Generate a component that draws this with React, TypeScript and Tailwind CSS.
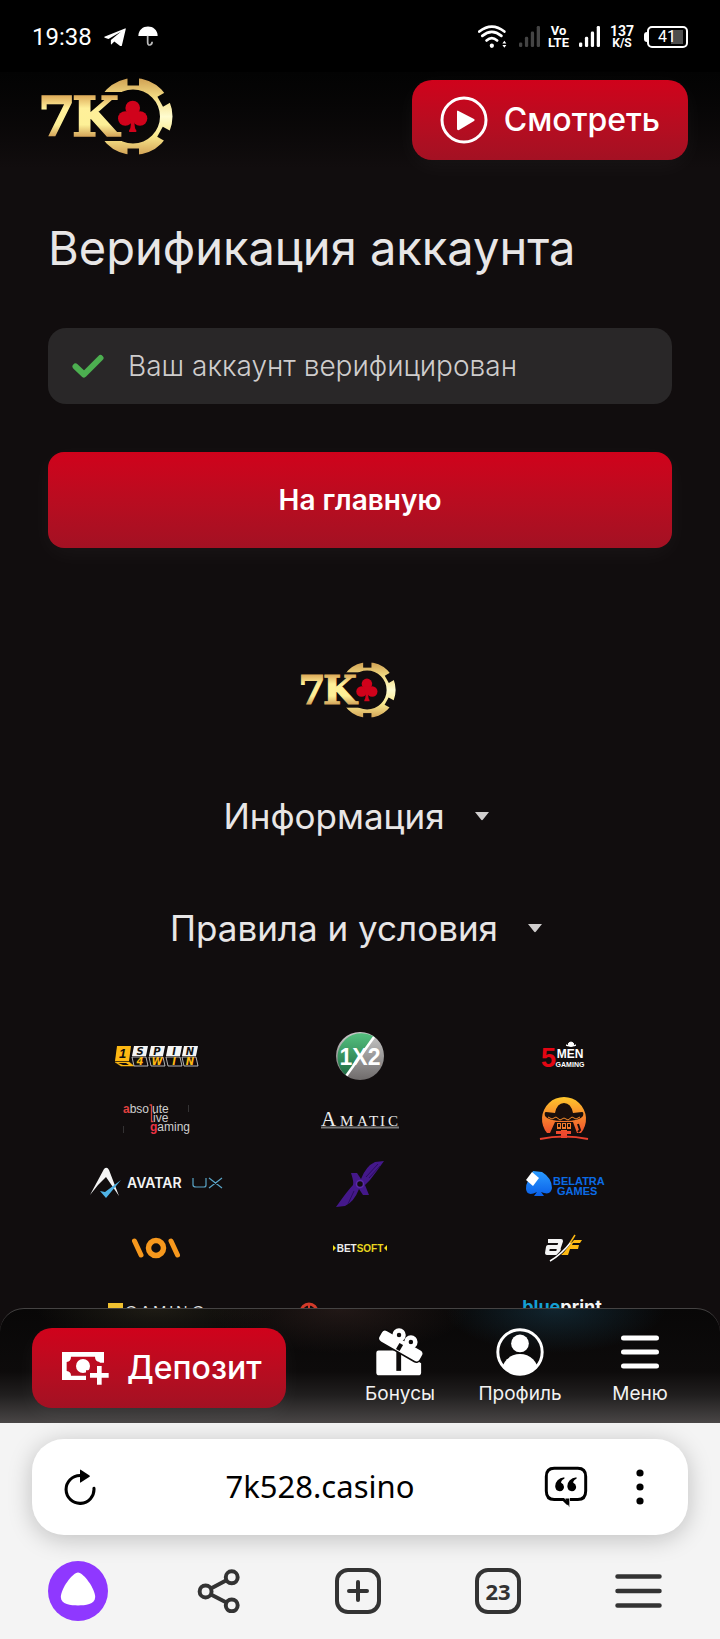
import type { ReactNode } from "react";

const redButton =
  "bg-linear-to-b from-[#d0021b] to-[#a31123] text-white shadow-[0_6px_24px_rgba(255,255,255,0.04)]";

function Logo({ id, className }: { id: string; className: string }) {
  return (
    <svg viewBox="0 0 133 77" className={`overflow-visible ${className}`} role="img" aria-label="7K">
      <defs>
        <linearGradient id={`${id}-ring`} x1="0" y1="0" x2="0" y2="77" gradientUnits="userSpaceOnUse">
          <stop offset="0" stopColor="#cf9f52" />
          <stop offset="0.25" stopColor="#f3dc84" />
          <stop offset="0.5" stopColor="#fffccf" />
          <stop offset="0.75" stopColor="#f9e88c" />
          <stop offset="1" stopColor="#d2a256" />
        </linearGradient>
        <linearGradient id={`${id}-text`} x1="0" y1="18" x2="0" y2="59" gradientUnits="userSpaceOnUse">
          <stop offset="0" stopColor="#dfae5c" />
          <stop offset="0.3" stopColor="#fff09a" />
          <stop offset="0.7" stopColor="#fdf097" />
          <stop offset="1" stopColor="#d2a056" />
        </linearGradient>
        <mask id={`${id}-mask`}>
          <rect width="133" height="77" fill="#fff" />
          <rect x="40" y="14" width="43" height="49" fill="#000" />
          <rect x="87.5" y="-2" width="11.5" height="9.5" fill="#000" />
          <rect x="87.5" y="70.5" width="11.5" height="9" fill="#000" />
          <rect x="87.5" y="-2" width="11.5" height="9.5" fill="#000" transform="rotate(61 93 38.5)" />
          <rect x="87.5" y="-2" width="11.5" height="9.5" fill="#000" transform="rotate(119 93 38.5)" />
        </mask>
      </defs>
      <path
        fillRule="evenodd"
        mask={`url(#${id}-mask)`}
        fill={`url(#${id}-ring)`}
        d="M94 0a38.5 38.5 0 0 1 0 77a38.5 38.5 0 0 1 0-77zM93 11.5a27 27 0 0 0 0 54a27 27 0 0 0 0-54z"
      />
      <g fill={`url(#${id}-text)`} stroke={`url(#${id}-text)`} strokeWidth="1.500" fontFamily="DejaVu Serif" fontWeight="700" fontSize="54">
        <text x="-2" y="58">7</text>
        <text x="32" y="58">K</text>
      </g>
      <g fill="#d0021b">
        <circle cx="92.700" cy="30" r="7.300" />
        <circle cx="85.300" cy="40.500" r="7.300" />
        <circle cx="100" cy="40.500" r="7.300" />
        <path d="M88 34h9.500v10H94.500q0 7 1.800 8v2h-7.200v-2q1.800-1 1.800-8z" />
      </g>
    </svg>
  );
}

function Signal({ className }: { className: string }) {
  return (
    <svg viewBox="0 0 64 66" className={className} fill="currentColor" aria-hidden="true">
      <rect x="0" y="50" width="10" height="14" rx="4" />
      <rect x="18" y="33" width="10" height="31" rx="4" />
      <rect x="36" y="17" width="10" height="47" rx="4" />
      <rect x="54" y="0" width="10" height="64" rx="4" />
    </svg>
  );
}

function StatusBar() {
  return (
    <div className="flex h-[72px] shrink-0 items-center justify-between bg-black px-8 pt-px font-['Roboto',sans-serif] text-white">
      <div className="flex items-center">
        <span className="text-2xl">19:38</span>
        <svg viewBox="313 80 64 58" className="ml-3 w-[22px]" fill="#fff" aria-hidden="true">
          <path d="M314 108 374 84Q377 83 376 87L365 134Q364 138 360 135L343 122 335 130Q333 132 333 128V118L362 94 326 115 315 111Q313 109 314 108z" />
        </svg>
        <svg viewBox="412 78 58 60" className="ml-3 w-5" aria-hidden="true">
          <path fill="#fff" d="M413 107C413 70 469 70 469 107z" />
          <path fill="none" stroke="#bbb" strokeWidth="5" d="M440 106V125Q440 134 447 133 453 132 453 124" />
        </svg>
      </div>
      <div className="flex items-center">
        <svg viewBox="351 70 88 72" className="w-[29px]" fill="none" stroke="#fff" strokeWidth="8" strokeLinecap="round" aria-hidden="true">
          <path d="M355 90Q393 60 431 90M364 103Q393 79 422 103M377 117Q393 103 409 117" />
          <circle cx="393" cy="133" r="6.500" fill="#fff" stroke="none" />
          <path fill="#fff" stroke="none" d="M431 118 437 126H425zM431 139 437 131H425z" />
        </svg>
        <Signal className="ml-3 w-[21px] text-[#444]" />
        <span className="ml-2 flex w-[21px] flex-col items-center text-[13px] leading-[12px] font-bold">
          <span>Vo</span>
          <span>LTE</span>
        </span>
        <Signal className="ml-2.5 w-[21px]" />
        <span className="ml-2.5 flex w-6 flex-col items-center text-sm leading-[12px] font-bold">
          <span>137</span>
          <span className="text-xs leading-[12px]">K/S</span>
        </span>
        <span className="ml-2.5 h-2.5 w-[3px] rounded-l-sm bg-white" />
        <span className="flex h-[22px] w-[41px] items-center rounded-[5px] border-2 border-white bg-linear-to-r from-transparent from-60% to-[#4d4d4d] to-60% bg-clip-content py-[2px] pr-[3px] pl-[9px] text-base">
          41
        </span>
      </div>
    </div>
  );
}

function Cell({ label, children }: { label: string; children: ReactNode }) {
  return (
    <li className="flex h-16 justify-center">
      <a href="#" aria-label={label}>
        <svg viewBox="-75 -32 150 64" className="h-16 w-[150px]" fontFamily="Liberation Sans" aria-hidden="true">
          {children}
        </svg>
      </a>
    </li>
  );
}

function Providers() {
  const tiles: [number, string, string][] = [
    [-24, "S", "4"],
    [-7, "P", "W"],
    [10, "I", "I"],
    [26, "N", "N"],
  ];
  return (
    <ul className="mt-10 grid grid-cols-3 px-[54px]">
      <Cell label="1spin4win">
        <path d="M-39-10H-25L-27 5H-41z" fill="#fdb813" />
        <path d="M-41 6H-27L-22 10H-35z" fill="#fdb813" stroke="#fdb813" strokeWidth=".5" />
        <path d="M-38 7h8l3 2h-6z" fill="#110d0e" />
        <text x="-37" y="2" fontSize="13" fontWeight="700" fontStyle="italic" fill="#110d0e">1</text>
        {tiles.map(([x, top, bottom]) => (
          <g key={x}>
            <path d={`M${x + 2}-10h14l-2 10h-14z`} fill="#f5f5f5" />
            <path d={`M${x} 1h14l2 9h-14z`} fill="#110d0e" stroke="#ddd" strokeWidth=".8" />
            <text x={x + 8} y="-1.500" fontSize="10" fontWeight="700" fontStyle="italic" fontFamily="DejaVu Sans" textAnchor="middle" fill="#111">{top}</text>
            <text x={x + 8} y="9" fontSize="10" fontWeight="700" fontStyle="italic" fontFamily="DejaVu Sans" textAnchor="middle" fill="#fdb813">{bottom}</text>
          </g>
        ))}
      </Cell>
      <Cell label="1X2">
        <defs>
          <linearGradient id="x2-green" x1="0" y1="0" x2="0" y2="1">
            <stop offset="0" stopColor="#55c07f" />
            <stop offset="1" stopColor="#1f6b43" />
          </linearGradient>
          <linearGradient id="x2-grey" x1="0" y1="0" x2="0" y2="1">
            <stop offset="0" stopColor="#c9c9c9" />
            <stop offset="1" stopColor="#6f6b6b" />
          </linearGradient>
        </defs>
        <circle r="24" fill="url(#x2-grey)" />
        <path d="M-14 19.500A24 24 0 0 1 14.500-19z" fill="url(#x2-green)" />
        <path d="M-13.500 19.500 14-19" stroke="#fff" strokeWidth="2.500" />
        <text y="9" fontSize="23" fontWeight="700" textAnchor="middle" fill="#fff">1X2</text>
      </Cell>
      <Cell label="5 Men Gaming">
        <text x="-23" y="11" fontSize="27" fontWeight="700" fill="#e30613">5</text>
        <text x="6" y="2" fontSize="12" fontWeight="700" textAnchor="middle" fill="#fff">MEN</text>
        <text x="6" y="11" fontSize="7" fontWeight="700" textAnchor="middle" fill="#fff">GAMING</text>
        <path d="M2-11Q7-8 12-11L10-10Q10-14 7-14T4-10z" fill="#fff" stroke="#fff" />
      </Cell>
      <Cell label="Absolute Live Gaming">
        <g fontSize="12" fill="#cfcfcf">
          <text x="-33" y="-7"><tspan fill="#e0403f" fontWeight="700">a</tspan>bso</text>
          <text x="-4" y="-7">ute</text>
          <text x="-3" y="2">ive</text>
          <text x="-6" y="11"><tspan fill="#ee3344" fontWeight="700">g</tspan>aming</text>
        </g>
        <path d="M-6.500-15h2V1.500h2" fill="none" stroke="#d8453f" strokeWidth="1.300" />
        <path d="M-32.500 6v7M32.500-15v7" stroke="#444" strokeWidth=".7" />
      </Cell>
      <Cell label="Amatic">
        <g fontFamily="Liberation Serif" fill="#eee">
          <text x="-39" y="6" fontSize="21">A</text>
          <text x="-20 -3 9 20 28" y="6" fontSize="15">MATIC</text>
        </g>
        <path d="M-39 7.500H39" stroke="#777" strokeWidth="2" />
      </Cell>
      <Cell label="Barbara Bang">
        <defs>
          <linearGradient id="sun" x1="0" y1="0" x2="0" y2="1">
            <stop offset="0" stopColor="#ffc72c" />
            <stop offset="1" stopColor="#f0502c" />
          </linearGradient>
        </defs>
        <path d="M-17 13A22 22 0 1 1 17 13z" fill="url(#sun)" />
        <path d="M-9-7Q-7-17 0-17T9-7L18-8Q20-8 19-4 16 1 0 1T-19-4Q-20-8-18-8z" fill="#1a0f0c" />
        <path d="M-16-3l4 2 4-2 4 3 4-2 4 2 4-3 4 2 4-2" fill="none" stroke="#f58a2c" />
        <path d="M-9 2H9L13 13H3V10H-3V13H-14z" fill="#1a0f0c" />
        <path d="M-7 3h4v6h-4zM-2 3h4v6h-4zM3 3h4v6h-4z" fill="#f47b2c" />
        <path d="M-5 4v3M0 4v3M5 4v3" stroke="#1a0f0c" strokeWidth="2" />
        <path d="M-8 11H7v3H3V18H-3V14H-8z" fill="#ef4a2e" />
        <path d="M-24 19Q0 14 24 19" fill="none" stroke="#e8402e" strokeWidth="2" />
        <path d="M14 4l2 6-2 2" fill="none" stroke="#1a0f0c" strokeWidth="2" />
      </Cell>
      <Cell label="Avatar UX">
        <path d="M-66 11-52-15Q-49-18-47-14L-37 12-50-7-58 1z" fill="#f4f4f4" />
        <path d="M-56 7-51 8-35-4-50 14z" fill="#4fb3e6" />
        <text x="-29" y="4" fontSize="14" fontWeight="600" fontFamily="Inter" fill="#f4f4f4">AVATAR</text>
        <path d="M37-6V1Q37 3 40 3H48Q50 3 50 1V-6M53-6 66 4M66-6 53 4" fill="none" stroke="#5aa5c8" strokeWidth="1.200" />
      </Cell>
      <Cell label="BeeFee">
        <path d="M-24 23Q-12 6-7 1-6-2-9-11H-3L1-5Q6-18 15-22L24-23Q17-13 10-4L5 1 9 11H3L-1 5Q-6 18-15 22z" fill="#44188a" />
        <circle r="3.500" fill="#110d0e" stroke="#5a2aa6" strokeWidth="1.500" />
        <path d="M6-7 18-20M9-6 20-18M-6 7-12 20" stroke="#2a0d5e" />
      </Cell>
      <Cell label="Belatra Games">
        <defs>
          <linearGradient id="spade" x1="0" y1="0" x2="0" y2="1">
            <stop offset="0" stopColor="#2a9bff" />
            <stop offset="1" stopColor="#0a5fe8" />
          </linearGradient>
        </defs>
        <path d="M-31-13-22-12Q-12-6-12 4-13 11-20 9L-23 8-20 12H-30L-27 8Q-37 13-38 5-38 0-36-3z" fill="url(#spade)" />
        <path d="M-32-12-25-6-31 2-38-4z" fill="#fff" />
        <text x="-11" y="1" fontSize="11" fontWeight="600" fontFamily="Liberation Sans" fill="#0b6be6">BELATRA</text>
        <text x="-7" y="11" fontSize="11" fontWeight="600" fontFamily="Liberation Sans" fill="#0b6be6">GAMES</text>
      </Cell>
      <Cell label="Vov">
        <g fill="none" stroke="#f7981d" strokeWidth="5" strokeLinecap="round">
          <path d="M-21.500-7-15 7M15-7 21.500 7" />
          <circle r="7.500" strokeWidth="5.500" />
        </g>
      </Cell>
      <Cell label="Betsoft">
        <path d="M-27-3l3 3-3 3zM27-3l-3 3 3 3z" fill="#f5df1a" />
        <text y="4" fontSize="10" fontWeight="700" textAnchor="middle" fill="#eee">
          BET<tspan fill="#e9d51f">SOFT</tspan>
        </text>
      </Cell>
      <Cell label="BF Games">
        <path d="M-16-7H-3L-5-1H-16L-17 5H-6L-5 0" fill="none" stroke="#f4f4f4" strokeWidth="4" strokeLinejoin="round" />
        <path d="M-4 7 10-8H18L16-5H9L8-3H15L14 1H6L4 7z" fill="#fdb913" />
        <path d="M-13 13Q0 5 10-13" fill="none" stroke="#110d0e" strokeWidth="3.500" />
        <path d="M-14 13Q-2 6 7-6" fill="none" stroke="#fff" strokeWidth="1.500" />
        <path d="M6-5 11-13" stroke="#fdb913" strokeWidth="1.500" />
      </Cell>
      <Cell label="BGaming">
        <path d="M-48-9h15v16h-15z" fill="#f0c030" />
        <text x="-45" y="6" fontSize="14" fontWeight="700" fill="#110d0e">B</text>
        <text x="-31 -16 -3 13 20 36" y="6" fontSize="16" fill="#ddd">GAMING</text>
      </Cell>
      <Cell label="Big Time Gaming">
        <circle cx="-51" cy="0" r="8" fill="none" stroke="#d23a2a" strokeWidth="3" />
        <path d="M-51-8V8M-58 0h14" stroke="#d23a2a" strokeWidth="2" />
        <text x="-39" y="4" fontSize="11" fontWeight="700" fill="#8a8a8a">Big Time Gaming</text>
      </Cell>
      <Cell label="Blueprint">
        <text x="-2" y="1" fontSize="18" fontWeight="700" fontFamily="Inter" textAnchor="middle" fill="#f4f4f4">
          <tspan fill="#159fd2">blue</tspan>print
        </text>
      </Cell>
    </ul>
  );
}

function FooterMenu({ title }: { title: string }) {
  return (
    <button type="button" className="flex h-28 items-center justify-center gap-[30px] pr-2 text-[35px] text-[#e8e6e6]">
      {title}
      <svg viewBox="0 0 14 9" className="w-3.5" fill="#d0cece" aria-hidden="true">
        <path d="M0 0H14L8 7.500Q7 9 6 7.500z" />
      </svg>
    </button>
  );
}

function NavItem({ label, children }: { label: string; children: ReactNode }) {
  return (
    <button type="button" className="flex w-[120px] flex-col items-center gap-1.5 text-[19px] leading-6 text-[#f2f2f2]">
      {children}
      {label}
    </button>
  );
}

function BottomNav() {
  return (
    <nav className="relative -mt-6 flex shrink-0 items-start justify-between rounded-t-3xl border-t border-[#454343] bg-[radial-gradient(110px_44px_at_555px_0,rgba(30,80,105,0.4),transparent),radial-gradient(130px_44px_at_340px_0,rgba(80,55,50,0.35),transparent),radial-gradient(120px_30px_at_155px_0,rgba(70,65,45,0.35),transparent),linear-gradient(to_bottom,#080707,#0d0b0b_55%,#201e1e_75%,#494646)] pt-[19px] pr-5 pb-[15px] pl-8">
      <button type="button" className={`flex h-20 items-center gap-[18px] rounded-[20px] px-[30px] pr-6 text-[32px] font-medium ${redButton}`}>
        <svg viewBox="189 177 141 99" className="w-[47px]" aria-hidden="true">
          <defs>
            <mask id="note">
              <rect x="189" y="177" width="141" height="99" fill="#fff" />
              <path d="M216 191H288Q288 205 302 207V233Q288 234 288 248H216Q216 236 203 234V207Q216 205 216 191z" fill="#000" />
              <circle cx="252" cy="219" r="21" fill="#fff" />
              <path d="M284 209H330V276H261V232H284z" fill="#000" />
            </mask>
          </defs>
          <rect x="189" y="177" width="126" height="84" fill="#fff" mask="url(#note)" />
          <path d="M294 219h14v21h21v14h-21v21h-14v-21h-21v-14h21z" fill="#fff" />
        </svg>
        Депозит
      </button>
      <div className="flex">
        <NavItem label="Бонусы">
          <svg viewBox="50 93 148 150" className="size-12" aria-hidden="true">
            <path d="M50 170Q50 163 57 163H125L190 203V232Q190 241 181 241H59Q50 241 50 232z" fill="#fff" />
            <path d="M120 146V227" stroke="#0d0b0b" strokeWidth="15" />
            <rect x="52" y="128" width="149" height="42" rx="14" transform="rotate(30 126 149)" fill="#fff" stroke="#0d0b0b" strokeWidth="5" />
            <circle cx="121" cy="115" r="14" fill="none" stroke="#fff" strokeWidth="14" />
            <circle cx="158" cy="137" r="14" fill="none" stroke="#fff" strokeWidth="14" />
            <path d="M128 143 117 162" stroke="#0d0b0b" strokeWidth="13" />
          </svg>
        </NavItem>
        <NavItem label="Профиль">
          <svg viewBox="409 98 146 146" className="size-12" aria-hidden="true">
            <clipPath id="avatar">
              <circle cx="482" cy="171" r="70" />
            </clipPath>
            <circle cx="482" cy="171" r="67.500" fill="none" stroke="#fff" strokeWidth="9" />
            <circle cx="482" cy="145" r="27" fill="#fff" />
            <circle cx="482" cy="233" r="56" fill="#fff" clipPath="url(#avatar)" />
          </svg>
        </NavItem>
        <NavItem label="Меню">
          <svg viewBox="0 0 48 48" className="size-12" stroke="#fff" strokeWidth="5" strokeLinecap="round" aria-hidden="true">
            <path d="M7.500 10h33M7.500 24h33M7.500 38h33" />
          </svg>
        </NavItem>
      </div>
    </nav>
  );
}

function Browser() {
  return (
    <div className="shrink-0 bg-[#f4f4f4] pt-4">
      <div className="mx-8 flex h-24 items-center rounded-[32px] bg-white pr-11 pl-8 shadow-[0_4px_24px_rgba(0,0,0,0.22)]">
        <button type="button" aria-label="Обновить">
          <svg viewBox="193 147 94 106" className="w-8" aria-hidden="true">
            <path d="M281 204A41 41 0 1 1 240 166" fill="none" stroke="#000" strokeWidth="9" strokeLinecap="round" />
            <path d="M242 149 268 166Q270 168 268 170L242 187Q240 188 240 185V151Q240 148 242 149z" />
          </svg>
        </button>
        <input
          aria-label="Адрес"
          readOnly
          value="7k528.casino"
          className="min-w-0 flex-1 bg-transparent pb-0.5 text-center font-['Noto_Sans',sans-serif] text-[31px] text-black outline-none"
        />
        <button type="button" aria-label="Отзывы">
          <svg viewBox="553 142 134 128" className="w-11" aria-hidden="true">
            <path d="M632 244H656Q680 244 680 218V174Q680 149 656 149H584Q560 149 560 174V218Q560 244 584 244H612L627 258" fill="none" stroke="#000" strokeWidth="9" />
            <path d="M618 241H630V268z" />
            <path d="M615 176Q588 180 587 204 588 219 601 219 613 218 614 206 613 196 605 193 605 185 615 181zM652 176Q625 180 624 204 625 219 638 219 650 218 651 206 650 196 642 193 642 185 652 181z" />
          </svg>
        </button>
        <button type="button" aria-label="Ещё" className="ml-12">
          <svg viewBox="0 0 8 36" className="w-2" aria-hidden="true">
            <circle cx="4" cy="4" r="3.600" />
            <circle cx="4" cy="18" r="3.600" />
            <circle cx="4" cy="32" r="3.600" />
          </svg>
        </button>
      </div>
      <div className="grid grid-cols-5 place-items-center pt-[26px] pr-3 pb-[18px] pl-2 text-[#333]">
        <button type="button" aria-label="Алиса">
          <svg viewBox="0 0 178 178" className="size-[60px]" aria-hidden="true">
            <circle cx="89" cy="89" r="89" fill="#8f38ff" />
            <path d="M89 34C105 34 140 82 140 107 140 129 110 132 89 132 68 132 38 129 38 107 38 82 73 34 89 34z" fill="#fff" />
          </svg>
        </button>
        <button type="button" aria-label="Поделиться">
          <svg viewBox="586 445 130 135" className="w-[43px]" fill="none" stroke="currentColor" strokeWidth="12" aria-hidden="true">
            <circle cx="691" cy="470" r="18" />
            <circle cx="612" cy="513" r="18" />
            <circle cx="691" cy="555" r="18" />
            <path d="M628 504 675 479M628 522 675 546" />
          </svg>
        </button>
        <button type="button" aria-label="Новая вкладка" className="flex size-[46px] items-center justify-center rounded-[13px] border-4 border-current">
          <svg viewBox="0 0 24 24" className="size-6" stroke="currentColor" strokeWidth="4" strokeLinecap="round" aria-hidden="true">
            <path d="M12 3v18M3 12h18" />
          </svg>
        </button>
        <button type="button" aria-label="Вкладки" className="flex size-[46px] items-center justify-center rounded-[13px] border-4 border-current font-['Noto_Sans',sans-serif] text-[22px] font-bold">
          23
        </button>
        <button type="button" aria-label="Меню браузера">
          <svg viewBox="0 0 47 36" className="w-[47px]" stroke="currentColor" strokeWidth="4.500" strokeLinecap="round" aria-hidden="true">
            <path d="M2.500 3.500h42M2.500 18h42M2.500 32.500h42" />
          </svg>
        </button>
      </div>
    </div>
  );
}

export default function App() {
  return (
    <div className="flex h-screen flex-col overflow-hidden bg-[#110d0e] font-['Inter',sans-serif] text-[#e8e6e6]">
      <StatusBar />
      <header className="flex h-24 shrink-0 items-start justify-between bg-linear-to-b from-[#030303] to-[#110d0e] pr-8 pl-10">
        <a href="#" className="mt-1.5">
          <Logo id="top" className="h-[77px] w-[133px]" />
        </a>
        <button type="button" className={`mt-2 flex h-20 items-center gap-4 rounded-[20px] px-7 text-[32px] font-medium ${redButton}`}>
          <svg viewBox="0 0 48 48" className="size-12" aria-hidden="true">
            <circle cx="24" cy="24" r="22" fill="none" stroke="#fff" strokeWidth="3" />
            <path d="M17.500 14.500 34 23Q35.500 24 34 25L19 34Q17 34.500 17 33V15.500Q17 14 18.500 14.500z" fill="#fff" />
          </svg>
          Смотреть
        </button>
      </header>
      <main className="min-h-0 flex-1 overflow-y-auto [scrollbar-width:none]">
        <section className="px-12 pt-14">
          <h1 className="text-[47px] leading-[48px]">Верификация аккаунта</h1>
          <p className="mt-14 flex h-[76px] items-center gap-6 rounded-[18px] bg-[#292728] px-6 text-[28px] font-light text-[#cfcdcd]">
            <svg viewBox="0 0 32 24" className="w-8" fill="none" stroke="#4caf50" strokeWidth="6" strokeLinecap="round" strokeLinejoin="round" aria-hidden="true">
              <path d="M3.500 12.500 12 20.500 28.500 4" />
            </svg>
            Ваш аккаунт верифицирован
          </p>
          <button type="button" className={`mt-12 h-24 w-full rounded-2xl text-[28px] font-semibold ${redButton}`}>
            На главную
          </button>
        </section>
        <footer className="flex flex-col pt-[114px]">
          <a href="#" className="mx-auto pr-6">
            <Logo id="bottom" className="h-14 w-24" />
          </a>
          <div className="mt-[42px] flex flex-col">
            <FooterMenu title="Информация" />
            <FooterMenu title="Правила и условия" />
          </div>
          <Providers />
        </footer>
      </main>
      <BottomNav />
      <Browser />
    </div>
  );
}
